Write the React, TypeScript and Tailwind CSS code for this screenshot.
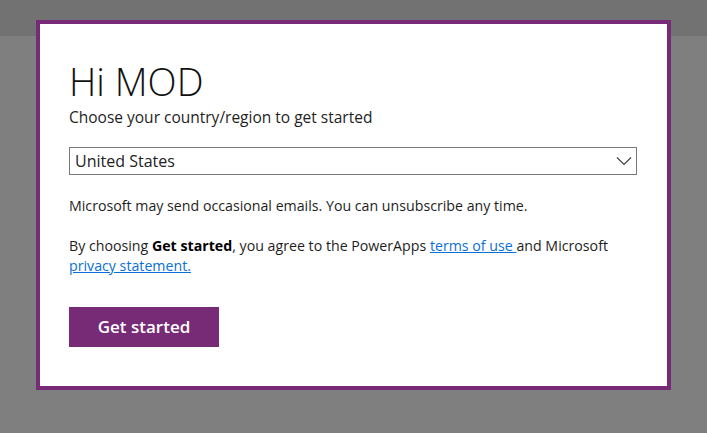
import React from "react";

export default function App() {
  const font = { fontFamily: '"Open Sans", "Noto Sans", sans-serif' };
  return (
    <div className="relative h-[433px] w-[707px] overflow-hidden bg-[#7f7f7f]" style={font}>
      <div className="h-[36px] w-full bg-[#727272]" />
      <div className="absolute left-[36px] top-[20px] h-[370px] w-[635px] border-4 border-[#772a76] bg-white">
        <div className="flex flex-col pl-[29px] pr-[30px] pt-[35px] text-[#1e1e1e]">
          <h1 className="text-[38px] font-light leading-[44px] text-[#111]">Hi MOD</h1>
          <p className="mt-[4px] text-[15.5px] leading-[20px]">Choose your country/region to get started</p>
          <div className="mt-[20px] flex h-[28px] w-[568px] items-center justify-between border border-[#7a7a7a] pl-[5px] pr-[3px]">
            <span className="text-[16px] leading-[20px] text-[#222]">United States</span>
            <svg width="16" height="10" viewBox="0 0 16 10" className="mr-[1px]">
              <path d="M1 1.5 L8 8.5 L15 1.5" fill="none" stroke="#444" strokeWidth="1.2" />
            </svg>
          </div>
          <p className="mt-[20px] text-[14.2px] leading-[21px]">
            Microsoft may send occasional emails. You can unsubscribe any time.
          </p>
          <p className="mt-[20px] text-[14.2px] leading-[20px]">
            By choosing <b className="font-bold text-black">Get started</b>, you agree to the PowerApps{" "}
            <a className="text-[#0a6fd6] underline" href="#">terms of use </a>and Microsoft
            <br />
            <a className="text-[#0a6fd6] underline" href="#">privacy statement.</a>
          </p>
          <button className="mt-[31px] flex h-[40px] w-[150px] items-center justify-center bg-[#772a76] text-[17px] font-semibold text-white">
            Get started
          </button>
        </div>
      </div>
    </div>
  );
}
